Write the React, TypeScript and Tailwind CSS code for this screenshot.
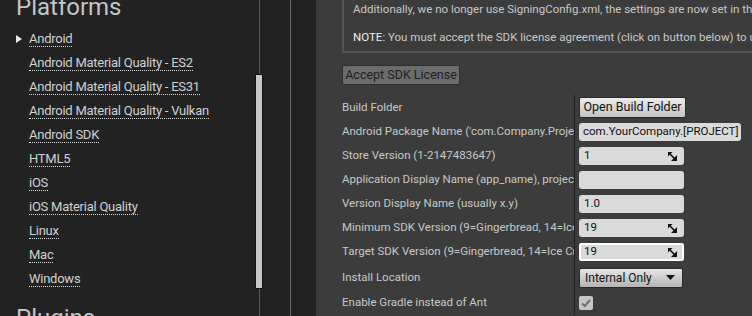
import React from 'react';

const platforms = [
  'Android',
  'Android Material Quality - ES2',
  'Android Material Quality - ES31',
  'Android Material Quality - Vulkan',
  'Android SDK',
  'HTML5',
  'iOS',
  'iOS Material Quality',
  'Linux',
  'Mac',
  'Windows',
];

function SpinIcon() {
  return (
    <svg width="9" height="9" viewBox="0 0 9 9" className="shrink-0">
      <path d="M0 0 L4.5 0 L0 4.5 Z" fill="#111" />
      <path d="M9 9 L3 9 L9 3 Z" fill="#111" />
      <path d="M1.5 1.5 L6.5 6.5" stroke="#111" strokeWidth="1.6" />
    </svg>
  );
}

function Row({ label, children, h = 'h-[24px]' }: { label: string; children?: React.ReactNode; h?: string }) {
  return (
    <div className={`flex items-center ${h}`}>
      <div className="w-[232px] shrink-0 overflow-hidden whitespace-nowrap text-[11.5px] text-[#c8c8c8]">{label}</div>
      <div className="w-px self-stretch bg-[#1e1e1e]" />
      <div className="flex items-center pl-[4px]">{children}</div>
    </div>
  );
}

function SpinBox({ value, focused }: { value: string; focused?: boolean }) {
  return (
    <div
      className={`flex h-[18px] w-[105px] items-center justify-between rounded-[3px] bg-[#dadada] pl-[5px] pr-[7px] text-[11.5px] text-[#111] ${
        focused ? 'ring-2 ring-white ring-inset' : ''
      }`}
    >
      <span>{value}</span>
      <SpinIcon />
    </div>
  );
}

export default function App() {
  return (
    <div
      className="flex h-[316px] w-[752px] overflow-hidden bg-[#222222]"
      style={{ fontFamily: 'Roboto, "Liberation Sans", sans-serif' }}
    >
      {/* Sidebar */}
      <div className="flex w-[291px] shrink-0 border-r border-[#6a6a6a]">
        <div className="w-[255px] shrink-0 pl-[16px]">
          <div className="mt-[-7px] h-[28px] text-[24px] leading-[28px] text-[#c4c4c4]">Platforms</div>
          <div className="mt-[6px] flex flex-col">
            {platforms.map((p, i) => (
              <div key={p} className="flex h-[24px] items-center">
                <div className="flex w-[13px] items-center">
                  {i === 0 && (
                    <svg width="6" height="8" viewBox="0 0 6 8">
                      <path d="M0 0 L6 4 L0 8 Z" fill="#e8e8e8" />
                    </svg>
                  )}
                </div>
                <span className="border-b border-dotted border-[#d8d8d8] text-[13px] leading-[15px] tracking-[-0.25px] text-[#d0d0d0]">
                  {p}
                </span>
              </div>
            ))}
          </div>
          <div className="mt-[13px] text-[24px] leading-[28px] text-[#c4c4c4]">Plugins</div>
        </div>
        <div className="flex w-[8px] shrink-0 flex-col items-center">
          <div className="h-[74px] w-px bg-[#5a5a5a]" />
          <div className="h-[215px] w-[8px] border border-[#111] bg-[#c8c8c8]" />
          <div className="flex-1 w-px bg-[#5a5a5a]" />
        </div>
      </div>
      <div className="w-[25px] shrink-0" />

      {/* Details panel */}
      <div className="flex-1 bg-[#3c3c3c] pl-[26px]">
        <div className="h-[53px] w-[560px] border-b-2 border-l-2 border-[#555555] pl-[9px] text-[11.5px] leading-[14px] text-[#c8c8c8] whitespace-nowrap">
          <div className="pt-[2px]">Additionally, we no longer use SigningConfig.xml, the settings are now set in the Project Settings.</div>
          <div className="mt-[14px]">
            <span className="text-[#f0f0f0]">NOTE</span>: You must accept the SDK license agreement (click on button below) to use Gradle.
          </div>
        </div>
        <div className="mt-[12px] flex h-[20px] w-[118px] items-center justify-center rounded-[2px] border border-[#2e2e2e] bg-[#6c6c6c] text-[12.5px] text-[#1e1e1e]">
          Accept SDK License
        </div>
        <div className="mt-[10px] flex flex-col">
          <Row label="Build Folder" h="h-[25px]">
            <div className="flex h-[21px] w-[107px] items-center justify-center rounded-[2px] border border-[#2a2a2a] bg-gradient-to-b from-[#ececec] to-[#c4c4c4] text-[12.5px] text-[#111]">
              Open Build Folder
            </div>
          </Row>
          <Row label="Android Package Name ('com.Company.Project', [PROJECT] is replaced with project name)">
            <div className="flex h-[18px] w-[162px] items-center whitespace-nowrap rounded-[3px] bg-[#dadada] px-[4px] text-[11.5px] text-[#111]">
              com.YourCompany.[PROJECT]
            </div>
          </Row>
          <Row label="Store Version (1-2147483647)">
            <SpinBox value="1" />
          </Row>
          <Row label="Application Display Name (app_name), project name if blank">
            <div className="h-[18px] w-[105px] rounded-[3px] bg-[#dadada]" />
          </Row>
          <Row label="Version Display Name (usually x.y)">
            <div className="flex h-[18px] w-[105px] items-center rounded-[3px] bg-[#dadada] px-[5px] text-[11.5px] text-[#111]">1.0</div>
          </Row>
          <Row label="Minimum SDK Version (9=Gingerbread, 14=Ice Cream Sandwich, 21=Lollipop)">
            <SpinBox value="19" />
          </Row>
          <Row label="Target SDK Version (9=Gingerbread, 14=Ice Cream Sandwich, 21=Lollipop)">
            <SpinBox value="19" focused />
          </Row>
          <Row label="Install Location" h="h-[27px]">
            <div className="flex h-[20px] w-[104px] items-center justify-between rounded-[2px] border border-[#2a2a2a] bg-gradient-to-b from-[#e6e6e6] to-[#b4b4b4] pl-[5px] pr-[7px] text-[12px] text-[#111]">
              <span>Internal Only</span>
              <svg width="9" height="5" viewBox="0 0 9 5">
                <path d="M0 0 L9 0 L4.5 5 Z" fill="#111" />
              </svg>
            </div>
          </Row>
          <Row label="Enable Gradle instead of Ant">
            <div className="flex h-[14px] w-[14px] items-center justify-center rounded-[2px] bg-[#c6c6c6]">
              <svg width="10" height="8" viewBox="0 0 10 8">
                <path d="M1 4.5 L3.8 7 L9 1" stroke="#6e6e6e" strokeWidth="2" fill="none" />
              </svg>
            </div>
          </Row>
        </div>
      </div>
    </div>
  );
}
